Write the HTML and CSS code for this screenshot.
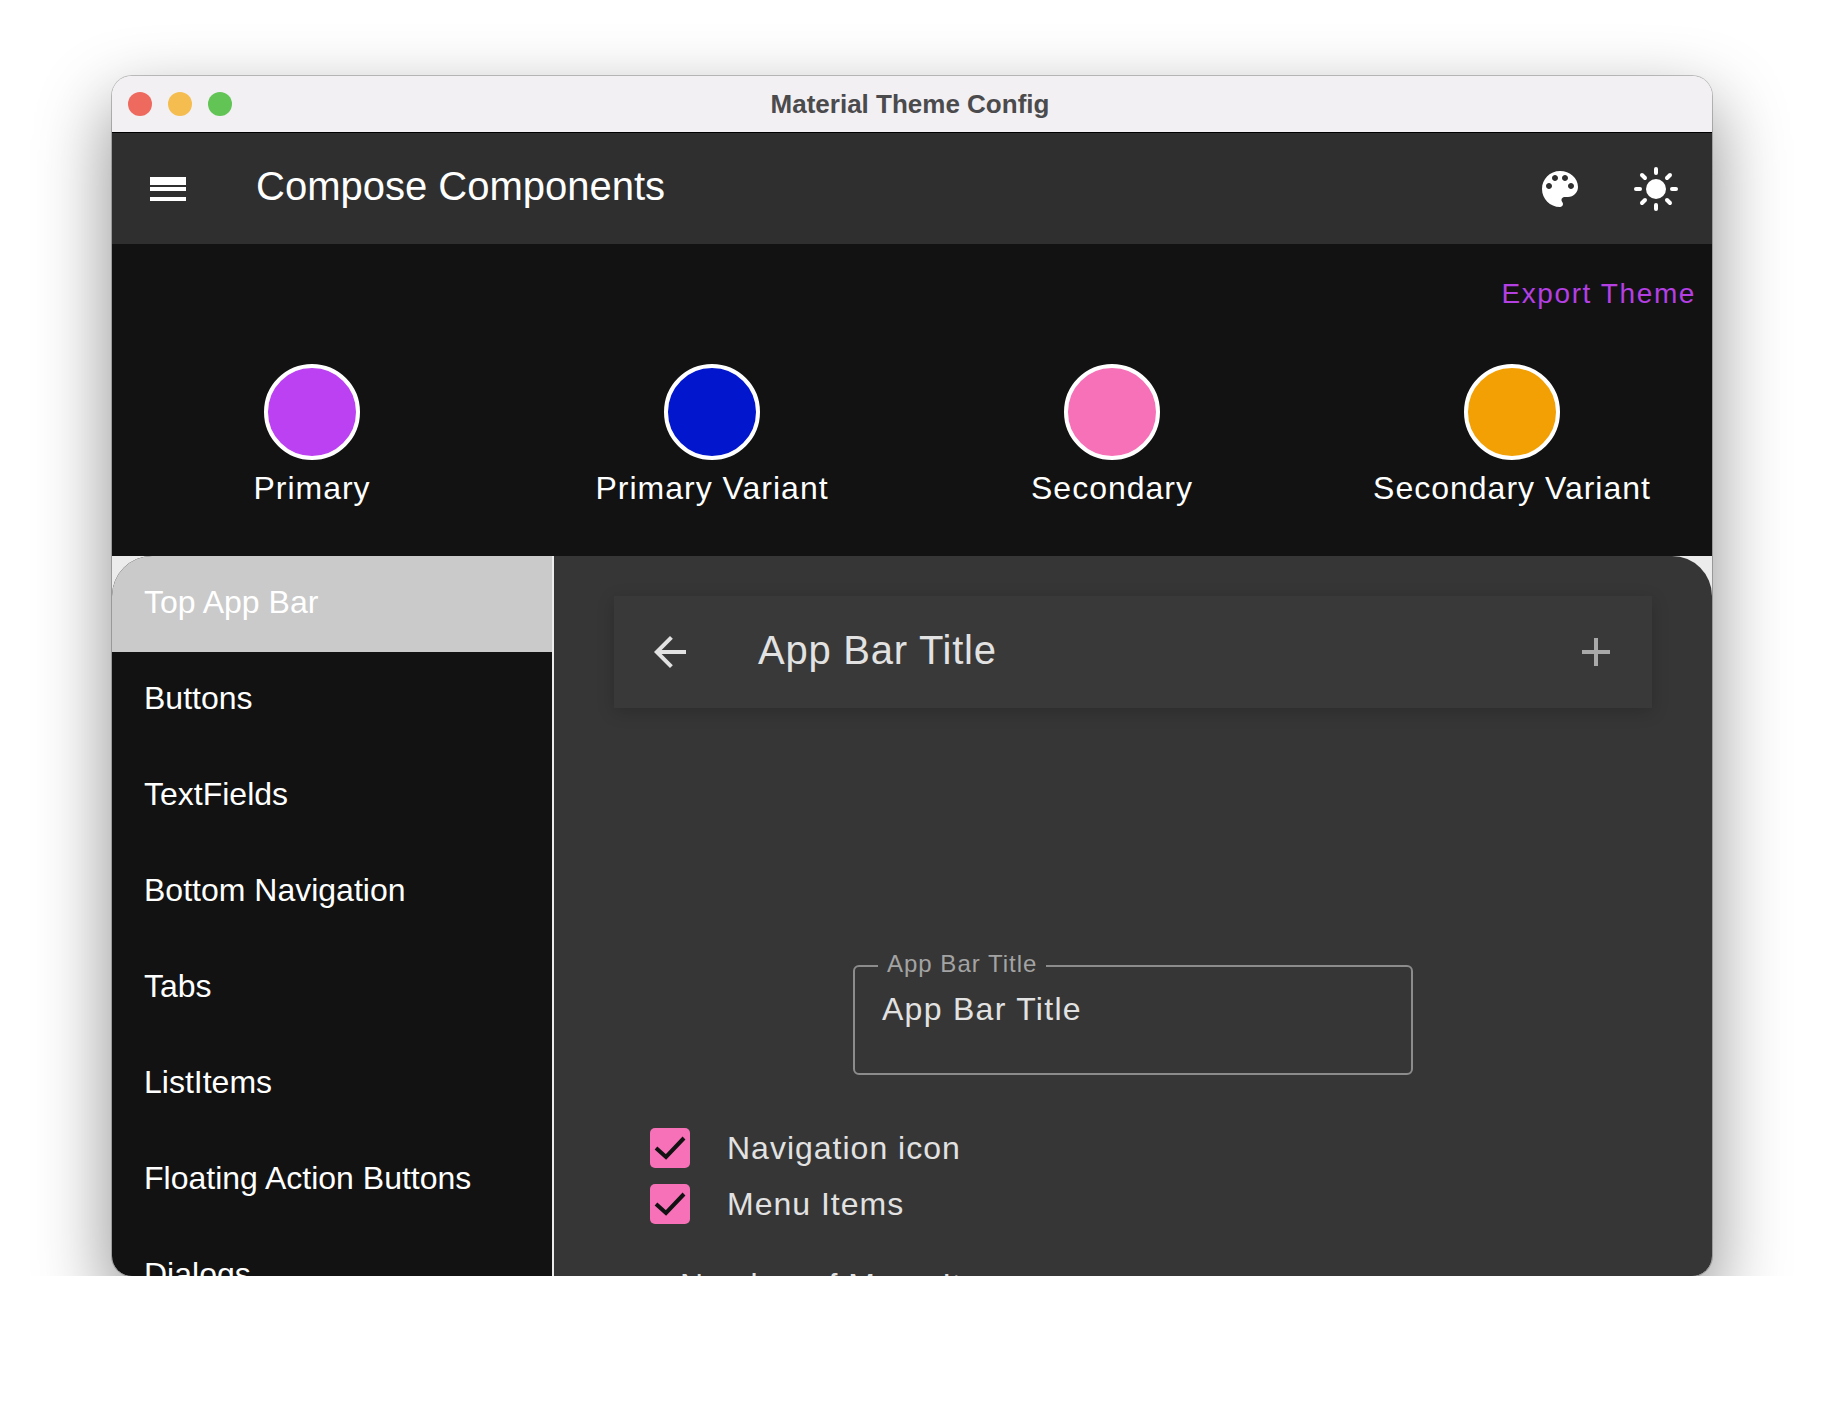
FILE: index.html
```html
<!DOCTYPE html>
<html lang="en">
  <head>
    <meta charset="utf-8" />
    <title>Material Theme Config</title>
    <link rel="stylesheet" href="styles.css">
  </head>
  <body>
    <div class="window">
      <div class="titlebar">
        <div class="lights">
          <span class="light red"></span>
          <span class="light yellow"></span>
          <span class="light green"></span>
        </div>
        <div class="window-title">Material Theme Config</div>
      </div>

      <div class="topbar">
        <svg class="icon" viewBox="0 0 24 24"><path d="M3 18h18v-2H3v2zm0-5h18v-2H3v2zm0-5v2h18V6H3z"/></svg>
        <div class="topbar-title">Compose Components</div>
        <svg class="icon" viewBox="0 0 24 24"><path d="M12 3c-4.97 0-9 4.03-9 9s4.03 9 9 9c.83 0 1.5-.67 1.5-1.5 0-.39-.15-.74-.39-1.01-.23-.26-.38-.61-.38-.99 0-.83.67-1.5 1.5-1.5H16c2.76 0 5-2.24 5-5 0-4.42-4.03-8-9-8zm-5.5 9c-.83 0-1.5-.67-1.5-1.5S5.67 9 6.5 9 8 9.67 8 10.5 7.33 12 6.5 12zm3-4C8.67 8 8 7.33 8 6.5S8.67 5 9.5 5s1.5.67 1.5 1.5S10.33 8 9.5 8zm5 0c-.83 0-1.5-.67-1.5-1.5S13.67 5 14.5 5s1.5.67 1.5 1.5S15.33 8 14.5 8zm3 4c-.83 0-1.5-.67-1.5-1.5S16.67 9 17.5 9s1.5.67 1.5 1.5-.67 1.5-1.5 1.5z"/></svg>
        <svg class="icon sun" viewBox="0 0 48 48">
          <circle cx="24" cy="24" r="10"/>
          <g class="rays">
            <line x1="24" y1="4" x2="24" y2="8"/>
            <line x1="24" y1="40" x2="24" y2="44"/>
            <line x1="4" y1="24" x2="8" y2="24"/>
            <line x1="40" y1="24" x2="44" y2="24"/>
            <line x1="10" y1="10" x2="13" y2="13"/>
            <line x1="35" y1="35" x2="38" y2="38"/>
            <line x1="38" y1="10" x2="35" y2="13"/>
            <line x1="13" y1="35" x2="10" y2="38"/>
          </g>
        </svg>
      </div>

      <div class="theme">
        <div class="export">Export Theme</div>
        <div class="swatches">
          <div class="swatch"><span class="dot primary"></span>Primary</div>
          <div class="swatch"><span class="dot primary-variant"></span>Primary Variant</div>
          <div class="swatch"><span class="dot secondary"></span>Secondary</div>
          <div class="swatch"><span class="dot secondary-variant"></span>Secondary Variant</div>
        </div>
      </div>

      <div class="panels">
        <div class="sidebar">
          <div class="nav-item active">Top App Bar</div>
          <div class="nav-item">Buttons</div>
          <div class="nav-item">TextFields</div>
          <div class="nav-item">Bottom Navigation</div>
          <div class="nav-item">Tabs</div>
          <div class="nav-item">ListItems</div>
          <div class="nav-item">Floating Action Buttons</div>
          <div class="nav-item">Dialogs</div>
        </div>

        <div class="main">
          <div class="appbar">
            <svg class="icon back" viewBox="0 0 24 24"><path d="M20 11H7.83l5.59-5.59L12 4l-8 8 8 8 1.41-1.41L7.83 13H20v-2z"/></svg>
            <div class="appbar-title">App Bar Title</div>
            <svg class="icon add" viewBox="0 0 24 24"><path d="M19 13h-6v6h-2v-6H5v-2h6V5h2v6h6v2z"/></svg>
          </div>

          <div class="field">
            <span class="field-label">App Bar Title</span>
            App Bar Title
          </div>

          <div class="check-row">
            <span class="checkbox"><svg viewBox="0 0 40 40"><polyline points="6,20 16,29 34,10"/></svg></span>
            Navigation icon
          </div>
          <div class="check-row">
            <span class="checkbox"><svg viewBox="0 0 40 40"><polyline points="6,20 16,29 34,10"/></svg></span>
            Menu Items
          </div>

          <div class="number-label">Number of Menu Items</div>
        </div>
      </div>
    </div>
  </body>
</html>
```

FILE: styles.css
```css
body {
  margin: 0;
  padding: 76px 112px 0;
  background: #fff;
  font-family: "Liberation Sans", Arial, sans-serif;
}

.window {
  height: 1200px;
  border-radius: 20px;
  overflow: hidden;
  display: flex;
  flex-direction: column;
  box-shadow: 0 0 0 1px rgba(0, 0, 0, 0.22), 0 30px 70px 4px rgba(0, 0, 0, 0.42);
}

.titlebar {
  height: 56px;
  flex: none;
  display: flex;
  align-items: center;
  position: relative;
  background: #f2f0f3;
  border-bottom: 1px solid #000;
}

.lights {
  display: flex;
  gap: 16px;
  padding-left: 16px;
}

.light {
  width: 24px;
  height: 24px;
  border-radius: 50%;
}

.red { background: #ee6a5f; }
.yellow { background: #f5bd4f; }
.green { background: #61c454; }

.window-title {
  position: absolute;
  left: 0;
  right: 4px;
  text-align: center;
  font-size: 26px;
  font-weight: bold;
  color: #4b4a4c;
}

.icon {
  width: 48px;
  height: 48px;
  flex: none;
  fill: #fff;
}

.topbar {
  height: 111px;
  flex: none;
  display: flex;
  align-items: center;
  gap: 48px;
  padding: 0 32px;
  background: #2f2f2f;
}

.topbar-title {
  flex: 1;
  margin-left: 16px;
  margin-top: -4px;
  font-size: 40px;
  color: #fff;
}

.rays line {
  stroke: #fff;
  stroke-width: 4;
  stroke-linecap: round;
}

.theme {
  height: 312px;
  flex: none;
  background: #121212;
}

.export {
  padding: 32px 16px 0 0;
  height: 88px;
  box-sizing: border-box;
  line-height: 36px;
  text-align: right;
  font-size: 28px;
  letter-spacing: 1.6px;
  color: #b43fe3;
}

.swatches {
  display: grid;
  grid-template-columns: repeat(4, 1fr);
}

.swatch {
  display: flex;
  flex-direction: column;
  align-items: center;
  margin-top: -8px;
  padding-top: 40px;
  font-size: 32px;
  letter-spacing: 1px;
  color: #fff;
}

.dot {
  width: 96px;
  height: 96px;
  box-sizing: border-box;
  margin-bottom: 10px;
  border: 4px solid #fff;
  border-radius: 50%;
}

.primary { background: #bb41f2; }
.primary-variant { background: #0216cd; }
.secondary { background: #f771b8; }
.secondary-variant { background: #f2a004; }

.panels {
  flex: 1;
  min-height: 0;
  display: flex;
  background: #ececec;
}

.sidebar {
  width: 440px;
  flex: none;
  overflow: hidden;
  border-top-left-radius: 40px;
  background: #121212;
  margin-right: 2px;
}

.nav-item {
  height: 96px;
  padding-left: 32px;
  line-height: 92px;
  font-size: 32px;
  color: #fff;
}

.nav-item.active {
  background: #cacaca;
}

.main {
  flex: 1;
  overflow: hidden;
  padding: 40px 60px 0;
  border-top-right-radius: 40px;
  background: #363636;
  color: #e2e2e2;
}

.appbar {
  height: 112px;
  display: flex;
  align-items: center;
  padding: 0 32px;
  background: #393939;
  box-shadow: 0 4px 16px rgba(0, 0, 0, 0.18);
}

.back { fill: #e2e2e2; }
.add { fill: #a9a9a9; }

.appbar-title {
  flex: 1;
  margin-left: 64px;
  margin-top: -4px;
  font-size: 40px;
  letter-spacing: 0.75px;
}

.field {
  position: relative;
  width: 560px;
  height: 110px;
  box-sizing: border-box;
  margin: 257px auto 0;
  padding: 22px 0 0 27px;
  border: 2px solid #8c8c8c;
  border-radius: 6px;
  font-size: 32px;
  line-height: 40px;
  letter-spacing: 1.28px;
}

.field-label {
  position: absolute;
  top: -18px;
  left: 23px;
  padding: 0 9px 0 9px;
  background: #363636;
  font-size: 24px;
  line-height: 30px;
  letter-spacing: 1px;
  color: #a3a3a3;
}

.check-row {
  display: flex;
  align-items: center;
  height: 40px;
  margin: 16px 0 0 36px;
  font-size: 32px;
  letter-spacing: 1px;
}

.field + .check-row {
  margin-top: 53px;
}

.checkbox {
  width: 40px;
  height: 40px;
  margin-right: 37px;
  border-radius: 5px;
  background: #f771b8;
}

.checkbox svg {
  display: block;
  fill: none;
  stroke: #121212;
  stroke-width: 4;
}

.number-label {
  margin: 41px 0 0 66px;
  font-size: 32px;
  line-height: 40px;
  letter-spacing: 1px;
}
```
